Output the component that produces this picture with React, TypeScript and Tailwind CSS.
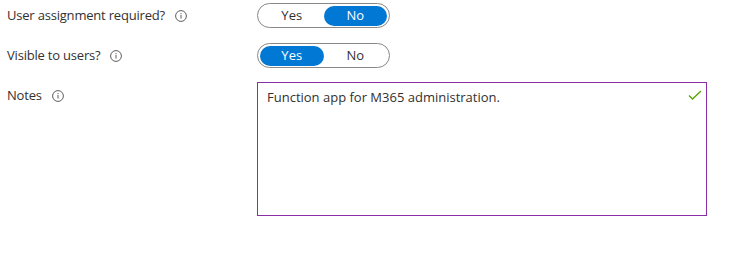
import React from 'react';

const InfoIcon: React.FC = () => (
  <svg width="12" height="12" viewBox="0 0 12 12" className="text-[#605e5c]">
    <circle cx="6" cy="6" r="5.4" fill="none" stroke="currentColor" strokeWidth="1" />
    <rect x="5.5" y="5" width="1" height="3.6" fill="currentColor" />
    <rect x="5.5" y="3.1" width="1" height="1.1" fill="currentColor" />
  </svg>
);

interface ToggleProps {
  value: 'yes' | 'no';
}

const Toggle: React.FC<ToggleProps> = ({ value }) => (
  <div className="flex w-[133px] h-[25px] items-center rounded-full border border-[#8a8886] p-[2px]">
    <button
      className={`flex-1 h-[20px] rounded-full text-[13px] leading-none ${value === 'yes' ? 'bg-[#0078d4] text-white' : 'text-[#323130]'}`}
    >
      Yes
    </button>
    <button
      className={`flex-1 h-[20px] rounded-full text-[13px] leading-none ${value === 'no' ? 'bg-[#0078d4] text-white' : 'text-[#323130]'}`}
    >
      No
    </button>
  </div>
);

const Label: React.FC<{ text: string }> = ({ text }) => (
  <div className="w-[257px] flex items-center gap-[10px] pl-[7px] text-[13px] tracking-[-0.2px] text-[#323130]">
    <span>{text}</span>
    <InfoIcon />
  </div>
);

export default function App() {
  return (
    <div className="w-[743px] h-[257px] bg-white font-['Segoe_UI','Open_Sans',sans-serif]">
      <div className="flex items-center pt-[3px] h-[28px]">
        <Label text="User assignment required?" />
        <Toggle value="no" />
      </div>
      <div className="flex items-center mt-[15px] h-[25px]">
        <Label text="Visible to users?" />
        <Toggle value="yes" />
      </div>
      <div className="flex items-start mt-[14px]">
        <div className="pt-[4px]">
          <Label text="Notes" />
        </div>
        <div className="relative w-[450px] h-[134px] border border-[#8a2fa8] pl-[9px] pr-[8px] pt-[5px] text-[13px] text-[#323130]">
          Function app for M365 administration.
          <svg width="14" height="10" viewBox="0 0 14 10" className="absolute right-[4px] top-[7px]">
            <path d="M1 5.5 L4.5 9 L13 1" fill="none" stroke="#57a300" strokeWidth="1.3" />
          </svg>
        </div>
      </div>
    </div>
  );
}
